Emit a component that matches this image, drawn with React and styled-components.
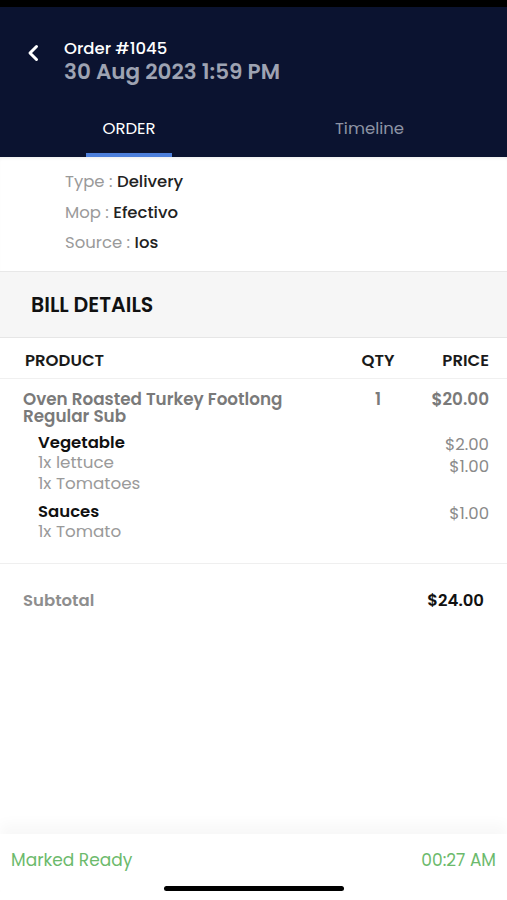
import React from 'react';
import styled, { createGlobalStyle } from 'styled-components';

const GlobalStyle = createGlobalStyle`
  html, body {
    margin: 0;
    padding: 0;
    background: #ffffff;
  }
  body {
    font-family: "Poppins", "Open Sans", "Liberation Sans", sans-serif;
  }
`;

const Screen = styled.div`
  width: 507px;
  height: 900px;
  display: flex;
  flex-direction: column;
  background: #ffffff;
  overflow: hidden;
`;

const StatusStrip = styled.div`
  height: 7px;
  background: #000000;
`;

const Header = styled.header`
  background: #0b1330;
  height: 150px;
  display: flex;
  flex-direction: column;
`;

const TitleRow = styled.div`
  display: flex;
  align-items: flex-start;
  padding: 31px 0 0 21px;
  gap: 19px;
`;

const BackButton = styled.button`
  border: 0;
  background: none;
  padding: 0;
  width: 24px;
  height: 24px;
  display: flex;
  align-items: center;
  justify-content: center;
  margin-top: 3px;
`;

const Titles = styled.div`
  display: flex;
  flex-direction: column;
`;

const OrderNo = styled.div`
  color: #ffffff;
  font-size: 16.5px;
  font-weight: 500;
  line-height: 21px;
`;

const OrderDate = styled.div`
  color: #9ea3b2;
  font-size: 21.5px;
  font-weight: 600;
  line-height: 25px;
`;

const Tabs = styled.div`
  margin-top: auto;
  display: grid;
  grid-template-columns: 258px 1fr;
  padding-right: 26px;
`;

const Tab = styled.div`
  display: flex;
  justify-content: center;
  div {
    color: ${p => (p.active ? '#ffffff' : '#8d93a4')};
    font-size: 16.5px;
    font-weight: 400;
    line-height: 22px;
    padding: 0 0 13px;
    min-width: 86px;
    text-align: center;
    border-bottom: 4px solid ${p => (p.active ? '#4d7fdb' : 'transparent')};
    border-radius: 2px 2px 0 0;
  }
`;

const InfoCard = styled.section`
  padding: 14px 0 17px 65px;
  display: flex;
  flex-direction: column;
  gap: 8.5px;
  border-bottom: 1px solid #e8e8e8;
  box-shadow: inset 0 3px 4px -3px rgba(0, 0, 0, 0.12);
`;

const InfoLine = styled.div`
  font-size: 16.5px;
  line-height: 22px;
  color: #9a9a9a;
  span {
    color: #222222;
    font-weight: 500;
  }
`;

const BillBand = styled.div`
  background: #f6f6f6;
  height: 65px;
  display: flex;
  align-items: center;
  padding-left: 31px;
  border-bottom: 1px solid #e6e6e6;
  font-size: 20.5px;
  font-weight: 600;
  color: #111111;
`;

const Table = styled.div`
  padding: 0 18px 0 23px;
`;

const Grid = styled.div`
  display: grid;
  grid-template-columns: 1fr 42px 90px;
  align-items: start;
`;

const HeadRow = styled(Grid)`
  height: 41px;
  box-sizing: border-box;
  padding: 4px 18px 0 25px;
  margin: 0 -18px 0 -23px;
  align-items: center;
  border-bottom: 1px solid #f0f0f0;
  font-size: 16.5px;
  font-weight: 600;
  color: #1a1a1a;
`;

const Cell = styled.div`
  text-align: ${p => p.align || 'left'};
  white-space: nowrap;
`;

const ItemRow = styled(Grid)`
  padding-top: 12px;
  font-size: 16.8px;
  font-weight: 600;
  color: #7a7a7a;
  line-height: 17px;
`;

const Modifiers = styled.div`
  padding: 8px 0 21px 15px;
  display: flex;
  flex-direction: column;
  gap: 8px;
`;

const ModGroup = styled.div`
  display: grid;
  grid-template-columns: 1fr auto;
`;

const ModTitle = styled.div`
  font-size: 16.5px;
  font-weight: 600;
  color: #111111;
  line-height: 19px;
`;

const ModItem = styled.div`
  font-size: 16.8px;
  color: #9a9a9a;
  line-height: 21px;
`;

const Prices = styled.div`
  display: flex;
  flex-direction: column;
  align-items: flex-end;
  font-size: 16.5px;
  color: #8a8a8a;
  line-height: 22px;
  padding-top: 1px;
`;

const Divider = styled.div`
  height: 1px;
  background: #efefef;
`;

const TotalRow = styled.div`
  display: flex;
  justify-content: space-between;
  padding: 25px 23px 0 23px;
  font-size: 16.5px;
  line-height: 24px;
  font-weight: 600;
  color: #8e8e8e;
  strong {
    color: #111111;
    font-weight: 600;
  }
`;

const Footer = styled.footer`
  margin-top: auto;
  height: 66px;
  display: flex;
  flex-direction: column;
  background: #ffffff;
  box-shadow: 0 -10px 14px rgba(0, 0, 0, 0.03);
  border-radius: 0 0 14px 14px;
`;

const FooterRow = styled.div`
  display: flex;
  justify-content: space-between;
  padding: 15px 11px 0 11px;
  font-size: 17px;
  line-height: 22px;
  color: #6cba6c;
  font-weight: 400;
`;

const HomeIndicator = styled.div`
  width: 180px;
  height: 5px;
  border-radius: 3px;
  background: #000000;
  margin: auto auto 9px;
`;

const ChevronLeft = () => (
  <svg width="20" height="20" viewBox="0 0 20 20">
    <path d="M13.5 3.5 L7 10 L13.5 16.5" fill="none" stroke="#ffffff" strokeWidth="3" strokeLinecap="round" strokeLinejoin="round" />
  </svg>
);

const info = [
  ['Type', 'Delivery'],
  ['Mop', 'Efectivo'],
  ['Source', 'Ios'],
];

export default function App() {
  return (
    <Screen>
      <GlobalStyle />
      <StatusStrip />
      <Header>
        <TitleRow>
          <BackButton aria-label="Back">
            <ChevronLeft />
          </BackButton>
          <Titles>
            <OrderNo>Order #1045</OrderNo>
            <OrderDate>30 Aug 2023 1:59 PM</OrderDate>
          </Titles>
        </TitleRow>
        <Tabs>
          <Tab active>
            <div>ORDER</div>
          </Tab>
          <Tab>
            <div>Timeline</div>
          </Tab>
        </Tabs>
      </Header>

      <InfoCard>
        {info.map(([k, v]) => (
          <InfoLine key={k}>
            {k} : <span>{v}</span>
          </InfoLine>
        ))}
      </InfoCard>

      <BillBand>BILL DETAILS</BillBand>

      <Table>
        <HeadRow>
          <Cell>PRODUCT</Cell>
          <Cell align="center">QTY</Cell>
          <Cell align="right">PRICE</Cell>
        </HeadRow>
        <ItemRow>
          <Cell>
            Oven Roasted Turkey Footlong
            <br />
            Regular Sub
          </Cell>
          <Cell align="center">1</Cell>
          <Cell align="right">$20.00</Cell>
        </ItemRow>
        <Modifiers>
          <ModGroup>
            <div>
              <ModTitle>Vegetable</ModTitle>
              <ModItem>1x lettuce</ModItem>
              <ModItem>1x Tomatoes</ModItem>
            </div>
            <Prices>
              <div>$2.00</div>
              <div>$1.00</div>
            </Prices>
          </ModGroup>
          <ModGroup>
            <div>
              <ModTitle>Sauces</ModTitle>
              <ModItem>1x Tomato</ModItem>
            </div>
            <Prices>
              <div>$1.00</div>
            </Prices>
          </ModGroup>
        </Modifiers>
      </Table>
      <Divider />
      <TotalRow>
        <span>Subtotal</span>
        <strong>$24.00</strong>
      </TotalRow>

      <Footer>
        <FooterRow>
          <span>Marked Ready</span>
          <span>00:27 AM</span>
        </FooterRow>
        <HomeIndicator />
      </Footer>
    </Screen>
  );
}
